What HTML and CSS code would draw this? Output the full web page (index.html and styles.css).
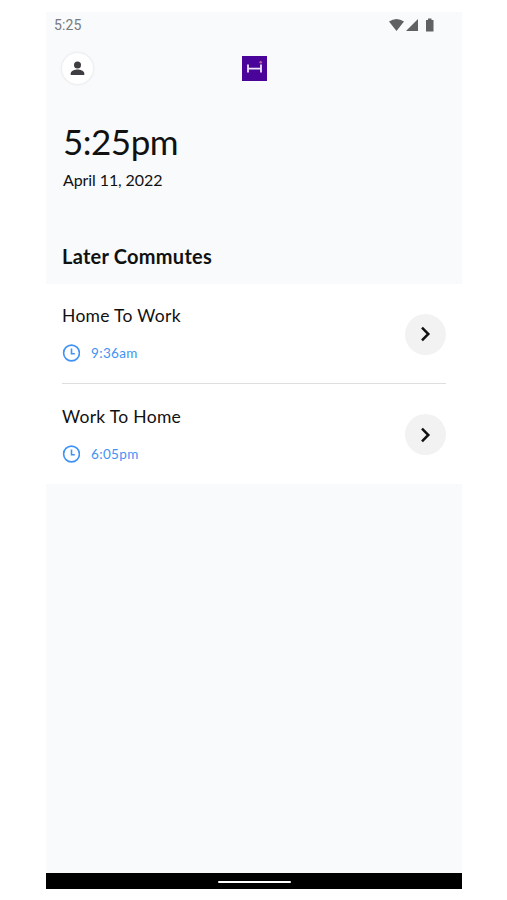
FILE: index.html
```html
<!DOCTYPE html>
<html lang="en">
<head>
<meta charset="utf-8">
<title>Later Commutes</title>
<link rel="stylesheet" href="styles.css">
</head>
<body>
<main class="phone">
  <div class="status">
    <span>5:25</span>
    <svg class="signals" width="46" height="14" viewBox="0 0 46 14" fill="#606163"><path d="M0 3.500Q7.500-1.500 15 3.500L7.500 13Z"/><path d="M17 13L29 1V13Z"/><path d="M37 2h2V0.500h3.500V2h2v11.500H37z"/></svg>
  </div>
  <header class="bar">
    <button class="avatar" aria-label="Profile"><svg width="20" height="20" viewBox="0 0 20 20" fill="#3d3d42"><circle cx="9.500" cy="7" r="3.500"/><path d="M2.700 17v-1.500c0-2.600 4.300-4 6.800-4s6.800 1.400 6.800 4v1.500z"/></svg></button>
    <svg class="logo" width="25" height="25" viewBox="0 0 25 25"><path fill="#4b0499" d="M0 0h25v25H0z"/><path d="M6 8.500v8M19 8.500v8M6 12.700h13" stroke="#eee5fa" stroke-width="1.800" fill="none"/><circle cx="18.700" cy="6.300" r="1.300" fill="#c95c9c"/></svg>
  </header>
  <section class="now">
    <h1 class="time">5:25pm</h1>
    <p class="date">April 11, 2022</p>
  </section>
  <h2 class="heading">Later Commutes</h2>
  <section class="list">
    <article class="row">
      <div class="info"><h3 class="name">Home To Work</h3>
        <p class="when"><svg width="18" height="18" viewBox="0 0 18 18" fill="none" stroke="#3f93f5" stroke-width="1.600"><circle cx="9.500" cy="9" r="7.900"/><path d="M9.500 4.500V9.700H12.800"/></svg><span>9:36am</span></p></div>
      <button class="go" aria-label="Open"><svg width="12" height="18" viewBox="0 0 12 18" fill="none" stroke="#111" stroke-width="2.500"><path d="M2 2.700L8.300 9L2 15.300"/></svg></button>
    </article>
    <article class="row">
      <div class="info"><h3 class="name">Work To Home</h3>
        <p class="when"><svg width="18" height="18" viewBox="0 0 18 18" fill="none" stroke="#3f93f5" stroke-width="1.600"><circle cx="9.500" cy="9" r="7.900"/><path d="M9.500 4.500V9.700H12.800"/></svg><span>6:05pm</span></p></div>
      <button class="go" aria-label="Open"><svg width="12" height="18" viewBox="0 0 12 18" fill="none" stroke="#111" stroke-width="2.500"><path d="M2 2.700L8.300 9L2 15.300"/></svg></button>
    </article>
  </section>
  <footer class="nav"><span class="handle"></span></footer>
</main>
</body>
</html>
```
FILE: styles.css
```css
* { box-sizing: border-box; margin: 0; padding: 0; }
body { background: #fff; font-family: Lato, sans-serif; color: #111; }
.phone { width: 416px; height: 877px; margin: 12px 0 0 46px; background: #f8fafb; display: flex; flex-direction: column; }
.status { height: 25px; padding: 0 27px 0 8px; display: flex; align-items: center; justify-content: space-between; font: 14px Roboto, sans-serif; letter-spacing: 0.1px; color: #77797b; }
.bar { height: 62px; padding: 0 16px; display: grid; grid-template-columns: 1fr auto 1fr; align-items: center; }
.avatar { width: 31px; height: 31px; border: 0; border-radius: 50%; background: #fff; box-shadow: 0 0 3px #0002; display: grid; place-items: center; }
.now { padding: 20px 17px 0; height: 130px; }
.time { font-size: 35px; font-weight: 400; line-height: 44px; letter-spacing: -0.5px; }
.date { font-size: 16px; line-height: 20px; margin-top: 7px; letter-spacing: -0.1px; }
.heading { height: 55px; padding: 0 16px; font-size: 20px; line-height: 54px; font-weight: 700; letter-spacing: 0.25px; }
.list { background: #fff; height: 200px; }
.row { height: 100px; margin: 0 16px; display: flex; align-items: center; justify-content: space-between; }
.row + .row { height: 101px; box-shadow: 0 -1px #dedede; }
.name { font-size: 17.500px; font-weight: 400; line-height: 22px; letter-spacing: 0.300px; }
.when { display: flex; align-items: center; gap: 11px; margin-top: 17px; font-size: 13.500px; line-height: 18px; letter-spacing: 0.350px; color: #3f93f5; }
.info { padding-bottom: 1px; }
.row + .row .info { padding-bottom: 0; }
.go { width: 41px; height: 41px; border: 0; border-radius: 50%; background: #f2f2f2; display: grid; place-items: center; }
.nav { margin-top: auto; height: 16px; background: #000; display: grid; place-items: center; }
.handle { width: 73px; height: 2px; margin-top: 2px; border-radius: 1px; background: #fff; }
```
